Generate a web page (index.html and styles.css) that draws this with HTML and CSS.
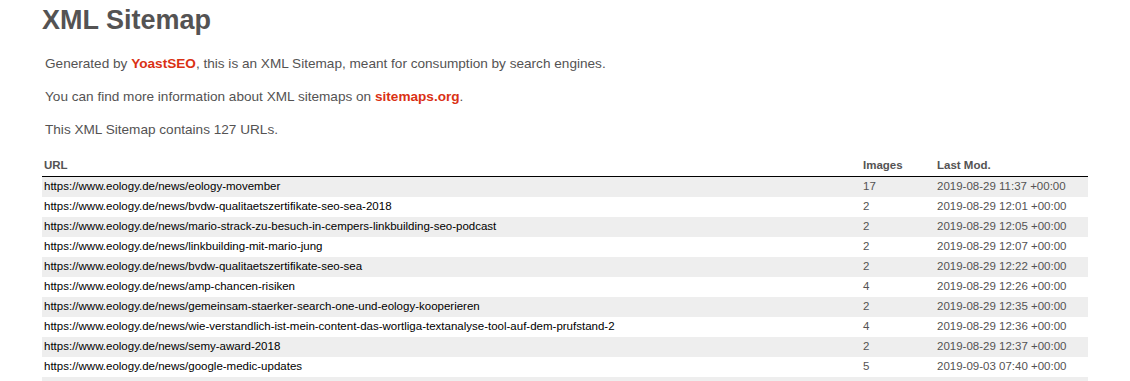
FILE: index.html
```html
<!DOCTYPE html>
<html lang="en">
<head>
<meta charset="utf-8">
<title>XML Sitemap</title>
<link rel="stylesheet" href="styles.css">
</head>
<body>
<div class="content">
  <h1 class="title">XML Sitemap</h1>
  <p class="expl">Generated by <a href="#">YoastSEO</a>, this is an XML Sitemap, meant for consumption by search engines.</p>
  <p class="expl">You can find more information about XML sitemaps on <a href="#">sitemaps.org</a>.</p>
  <p class="expl expl-count">This XML Sitemap contains 127 URLs.</p>
  <table class="sitemap">
    <thead>
      <tr>
        <th class="col-url">URL</th>
        <th class="col-img">Images</th>
        <th class="col-mod">Last Mod.</th>
      </tr>
    </thead>
    <tbody>
      <tr><td><a href="#">https://www.eology.de/news/eology-movember</a></td><td>17</td><td>2019-08-29 11:37 +00:00</td></tr>
      <tr><td><a href="#">https://www.eology.de/news/bvdw-qualitaetszertifikate-seo-sea-2018</a></td><td>2</td><td>2019-08-29 12:01 +00:00</td></tr>
      <tr><td><a href="#">https://www.eology.de/news/mario-strack-zu-besuch-in-cempers-linkbuilding-seo-podcast</a></td><td>2</td><td>2019-08-29 12:05 +00:00</td></tr>
      <tr><td><a href="#">https://www.eology.de/news/linkbuilding-mit-mario-jung</a></td><td>2</td><td>2019-08-29 12:07 +00:00</td></tr>
      <tr><td><a href="#">https://www.eology.de/news/bvdw-qualitaetszertifikate-seo-sea</a></td><td>2</td><td>2019-08-29 12:22 +00:00</td></tr>
      <tr><td><a href="#">https://www.eology.de/news/amp-chancen-risiken</a></td><td>4</td><td>2019-08-29 12:26 +00:00</td></tr>
      <tr><td><a href="#">https://www.eology.de/news/gemeinsam-staerker-search-one-und-eology-kooperieren</a></td><td>2</td><td>2019-08-29 12:35 +00:00</td></tr>
      <tr><td><a href="#">https://www.eology.de/news/wie-verstandlich-ist-mein-content-das-wortliga-textanalyse-tool-auf-dem-prufstand-2</a></td><td>4</td><td>2019-08-29 12:36 +00:00</td></tr>
      <tr><td><a href="#">https://www.eology.de/news/semy-award-2018</a></td><td>2</td><td>2019-08-29 12:37 +00:00</td></tr>
      <tr><td><a href="#">https://www.eology.de/news/google-medic-updates</a></td><td>5</td><td>2019-09-03 07:40 +00:00</td></tr>
      <tr class="row-cut"><td></td><td></td><td></td></tr>
    </tbody>
  </table>
</div>
</body>
</html>
```

FILE: styles.css
```css
html, body {
  margin: 0;
  padding: 0;
  background: #fff;
}

body {
  font-family: "Liberation Sans", Arial, Helvetica, sans-serif;
  font-size: 13.6px;
  color: #545353;
}

.content {
  width: 1046px;
  margin: 0 auto;
  padding-top: 4px;
}

.title {
  margin: 0;
  font-size: 27px;
  line-height: 32px;
  font-weight: bold;
  color: #545353;
}

.expl {
  margin: 20px 3px 17px;
  line-height: 16.2px;
}

.expl + .expl {
  margin-top: 17px;
}

.expl-count {
  margin-bottom: 15px;
}

.expl a {
  color: #da3114;
  font-weight: bold;
  text-decoration: none;
}

a {
  color: #000;
  text-decoration: none;
}

.sitemap {
  width: 100%;
  border: none;
  border-collapse: collapse;
  margin-top: 0;
}

.sitemap th {
  box-sizing: border-box;
  text-align: left;
  font-size: 11.5px;
  line-height: 18px;
  padding: 2px 31px 2px 2px;
  border-bottom: 1px solid #000;
  color: #545353;
}

.sitemap .col-img {
  width: 74px;
}

.sitemap .col-mod {
  width: 153px;
}

.sitemap td {
  font-size: 11.5px;
  line-height: 18px;
  height: 20px;
  box-sizing: border-box;
  padding: 0 2px 2px 2px;
  white-space: nowrap;
}

.sitemap tbody tr:nth-child(odd) td {
  background-color: #eee;
}
```
